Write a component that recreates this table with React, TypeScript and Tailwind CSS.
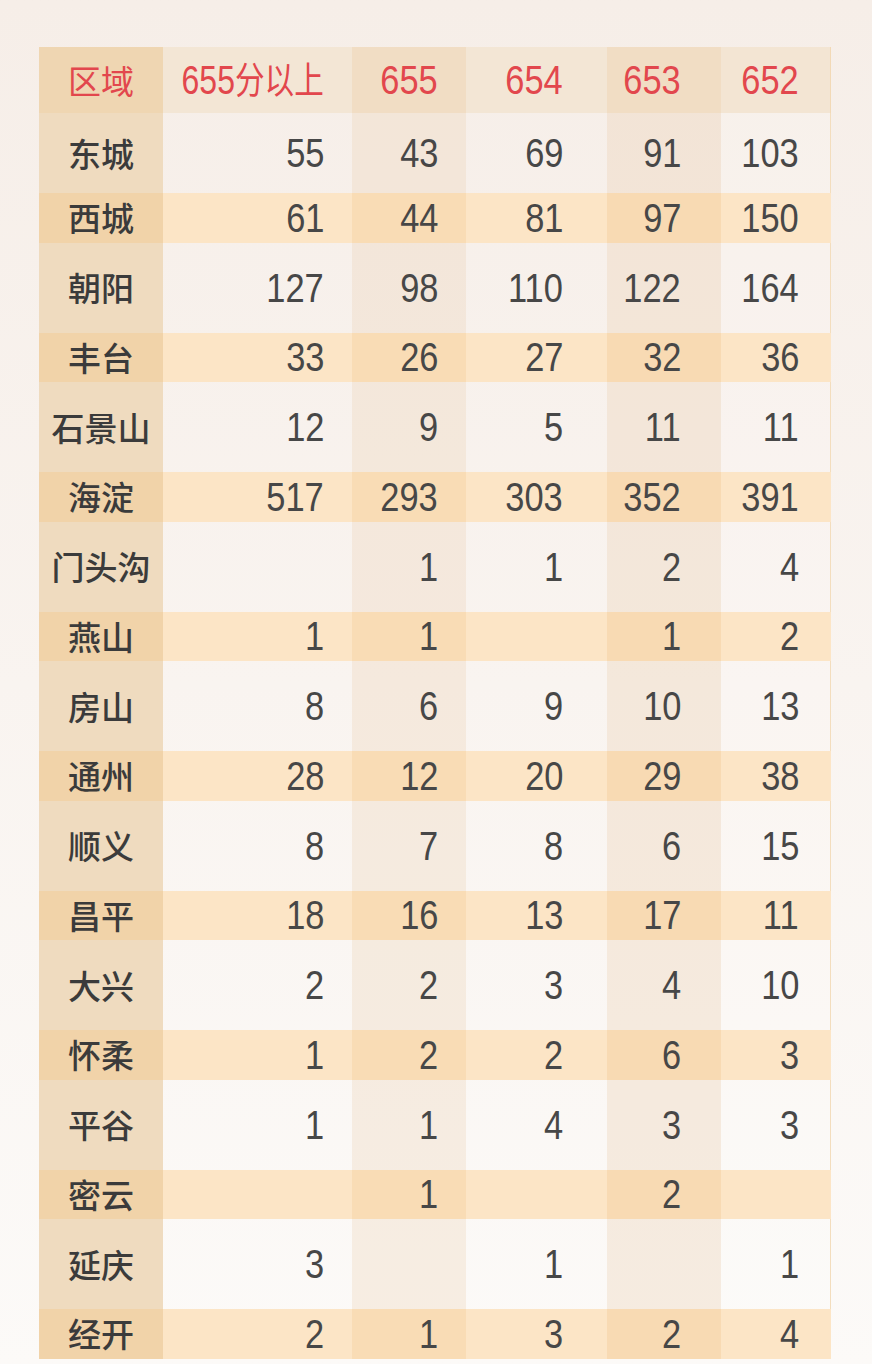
import React from 'react';

type Row = { name: string; values: string[] };

const ROWS: Row[] = [
  { name: '东城', values: ['55', '43', '69', '91', '103'] },
  { name: '西城', values: ['61', '44', '81', '97', '150'] },
  { name: '朝阳', values: ['127', '98', '110', '122', '164'] },
  { name: '丰台', values: ['33', '26', '27', '32', '36'] },
  { name: '石景山', values: ['12', '9', '5', '11', '11'] },
  { name: '海淀', values: ['517', '293', '303', '352', '391'] },
  { name: '门头沟', values: ['', '1', '1', '2', '4'] },
  { name: '燕山', values: ['1', '1', '', '1', '2'] },
  { name: '房山', values: ['8', '6', '9', '10', '13'] },
  { name: '通州', values: ['28', '12', '20', '29', '38'] },
  { name: '顺义', values: ['8', '7', '8', '6', '15'] },
  { name: '昌平', values: ['18', '16', '13', '17', '11'] },
  { name: '大兴', values: ['2', '2', '3', '4', '10'] },
  { name: '怀柔', values: ['1', '2', '2', '6', '3'] },
  { name: '平谷', values: ['1', '1', '4', '3', '3'] },
  { name: '密云', values: ['', '1', '', '2', ''] },
  { name: '延庆', values: ['3', '', '1', '', '1'] },
  { name: '经开', values: ['2', '1', '3', '2', '4'] },
];

const GRID = 'grid grid-cols-[124px_189px_114px_141px_114px_110px]';

// right padding of each score column, so numbers line up under the header
const PAD = ['pr-[28px]', 'pr-[28px]', 'pr-[44px]', 'pr-[40px]', 'pr-[32px]'];

const HEAD_BG = ['bg-[#f3e6d5]', 'bg-[#f1ddc4]', 'bg-[#f3e6d5]', 'bg-[#f1ddc4]', 'bg-[#f3e5d3]'];
const LIGHT_BG = ['bg-transparent', 'bg-[#ead2b4]/30', 'bg-transparent', 'bg-[#ead2b4]/35', 'bg-white/10'];
const TAN_BG = ['bg-[#fce5c6]', 'bg-[#f9dcb5]', 'bg-[#fce5c6]', 'bg-[#f8dab3]', 'bg-[#fce5c6]'];

const num = "font-['Liberation_Sans','Noto_Sans_CJK_SC',sans-serif]";
const cjk = "font-['Noto_Sans_CJK_SC',sans-serif]";

const Num: React.FC<{ v: string; red?: boolean }> = ({ v, red }) => (
  <span
    className={`inline-block origin-right scale-x-[0.86] whitespace-nowrap text-[40px] leading-none ${num} ${
      red ? 'text-[#e2474d]' : 'text-[#474747]'
    }`}
  >
    {v}
  </span>
);

const App: React.FC = () => {
  return (
    <div className="min-h-[1364px] w-full bg-linear-to-b from-[#f6eee8] to-[#fcfaf8] pt-[47px] pl-[39px]">
      <div className="w-[792px] border-r border-[#f2d9b6]">
        {/* Header */}
        <div className={`${GRID} h-[66px] overflow-hidden`}>
          <div className="flex items-center justify-center bg-[#efd6b2]">
            <span className={`${cjk} text-[33px] leading-none text-[#e2474d]`}>区域</span>
          </div>
          <div className={`flex items-center justify-end ${HEAD_BG[0]} ${PAD[0]}`}>
            <span
              className={`inline-block origin-right scale-x-[0.8] whitespace-nowrap leading-none text-[#e2474d] ${num}`}
            >
              <span className="text-[40px]">655</span>
              <span className={`${cjk} text-[37px]`}>分以上</span>
            </span>
          </div>
          {['655', '654', '653', '652'].map((h, i) => (
            <div key={h} className={`flex items-center justify-end ${HEAD_BG[i + 1]} ${PAD[i + 1]}`}>
              <Num v={h} red />
            </div>
          ))}
        </div>

        {/* Body */}
        {ROWS.map((row, r) => {
          const tan = r % 2 === 1;
          const height = r === 0 ? 'h-[80px]' : tan ? 'h-[49.5px]' : 'h-[90px]';
          return (
            <div key={row.name} className={`${GRID} ${height}`}>
              <div
                className={`flex items-center justify-center ${tan ? 'bg-[#f1d3a9]' : 'bg-[#efdbbf]'}`}
              >
                <span className={`${cjk} whitespace-nowrap text-[33px] font-medium leading-none text-[#3b3b3b]`}>
                  {row.name}
                </span>
              </div>
              {row.values.map((v, i) => (
                <div
                  key={i}
                  className={`flex items-center justify-end ${tan ? TAN_BG[i] : LIGHT_BG[i]} ${PAD[i]}`}
                >
                  {v && <Num v={v} />}
                </div>
              ))}
            </div>
          );
        })}
      </div>
    </div>
  );
};

export default App;
